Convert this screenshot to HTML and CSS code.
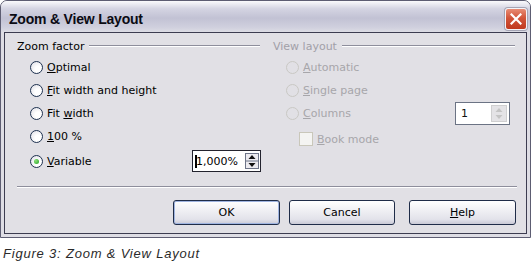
FILE: index.html
```html
<!DOCTYPE html>
<html lang="en">
  <head>
    <meta charset="UTF-8" />
    <title>Zoom &amp; View Layout</title>
    <link rel="stylesheet" href="styles.css">
  </head>
  <body>
    <div class="window">
      <div class="titlebar">
        <span class="title">Zoom &amp; View Layout</span>
        <span class="close">
          <svg width="12" height="12" viewBox="0 0 12 12">
            <path d="M1.5 1.5 L10.5 10.5 M10.5 1.5 L1.5 10.5" stroke="#fff" stroke-width="2.2" stroke-linecap="square" />
          </svg>
        </span>
      </div>

      <div class="client">
        <div class="groups">
          <!-- Zoom factor -->
          <section class="group">
            <div class="group-head"><span>Zoom factor</span><i class="rule"></i></div>
            <div class="opt"><span class="radio"></span><span><u>O</u>ptimal</span></div>
            <div class="opt"><span class="radio"></span><span><u>F</u>it width and height</span></div>
            <div class="opt"><span class="radio"></span><span>Fit <u>w</u>idth</span></div>
            <div class="opt"><span class="radio"></span><span><u>1</u>00 %</span></div>
            <div class="opt opt-last">
              <span class="radio checked"></span><span><u>V</u>ariable</span>
              <span class="spin spin-var">
                <span class="spin-text"><b class="caret"></b>1,000%</span>
                <span class="spin-btns">
                  <svg width="14" height="16" viewBox="0 0 14 16">
                    <rect x="0.5" y="0.5" width="13" height="15" fill="#ecebf0" stroke="#6d7488" />
                    <line x1="1" y1="8" x2="13" y2="8" stroke="#6d7488" />
                    <path d="M7 2 L10.5 6 L3.5 6 Z" fill="#111" />
                    <path d="M7 14 L10.5 10 L3.5 10 Z" fill="#111" />
                  </svg>
                </span>
              </span>
            </div>
          </section>

          <!-- View layout -->
          <section class="group disabled">
            <div class="group-head"><span>View layout</span><i class="rule"></i></div>
            <div class="opt"><span class="radio"></span><span><u>A</u>utomatic</span></div>
            <div class="opt"><span class="radio"></span><span><u>S</u>ingle page</span></div>
            <div class="opt">
              <span class="radio"></span><span><u>C</u>olumns</span>
              <span class="spin spin-cols">
                <span class="spin-text">1</span>
                <span class="spin-btns">
                  <svg width="16" height="17" viewBox="0 0 16 17">
                    <rect x="0.5" y="0.5" width="15" height="16" fill="#e4e3e6" stroke="#cfcfd0" />
                    <path d="M8 3 L11.5 7 L4.5 7 Z" fill="#c4c4c4" />
                    <path d="M8 14 L11.5 10 L4.5 10 Z" fill="#c4c4c4" />
                  </svg>
                </span>
              </span>
            </div>
            <div class="opt opt-book"><span class="check"></span><span><u>B</u>ook mode</span></div>
          </section>
        </div>

        <div class="sep"></div>

        <div class="buttons">
          <button class="btn btn-default">OK</button>
          <button class="btn btn-cancel">Cancel</button>
          <button class="btn btn-help"><u>H</u>elp</button>
        </div>
      </div>
    </div>

    <p class="caption">Figure 3: Zoom &amp; View Layout</p>
  </body>
</html>
```

FILE: styles.css
```css
body {
  margin: 0;
  background: #fff;
  font-family: "DejaVu Sans", Verdana, sans-serif;
  font-size: 11px;
  color: #000;
}
u {
  text-decoration: underline;
  text-underline-offset: 1px;
}

.window {
  width: 529px;
  height: 236px;
  border: 1px solid #5d5d72;
  border-radius: 7px 7px 0 0;
  background: #dedde4;
  display: flex;
  flex-direction: column;
}
.titlebar {
  height: 27px;
  padding: 4px 3px 0 8px;
  display: flex;
  align-items: center;
  justify-content: space-between;
  border-radius: 6px 6px 0 0;
  background: linear-gradient(#fafafc 0%, #d4d4e2 25%, #c2c2d4 55%, #d0d0de 85%, #dcdce4 100%);
}
.title {
  font-family: "Liberation Sans", Arial, sans-serif;
  font-weight: bold;
  font-size: 14px;
  letter-spacing: -0.2px;
  color: #0b0b14;
}
.close {
  width: 20px;
  height: 20px;
  border: 1px solid #f4f4f8;
  border-radius: 3px;
  background: linear-gradient(#e88c74, #d2553a 45%, #c0391f);
  display: flex;
  align-items: center;
  justify-content: center;
  box-shadow: 0 0 0 1px #a4a4b4;
}

.client {
  flex: 1;
  margin: 0 3px 3px;
  border: 1px solid #3c3c50;
  background: #e1e0e5;
  display: flex;
  flex-direction: column;
}
.groups {
  display: grid;
  grid-template-columns: 243px 242px;
  column-gap: 13px;
  padding: 6px 10px 0 12px;
}
.group-head {
  height: 14px;
  display: flex;
  align-items: center;
  gap: 5px;
  margin-bottom: 3px;
}
.rule {
  flex: 1;
  height: 0;
  border-top: 1px solid #8e8e9c;
  border-bottom: 1px solid #fff;
}
.opt {
  height: 23px;
  display: flex;
  align-items: center;
  padding-left: 13px;
}
.opt-last {
  height: 26px;
}
.opt-book {
  height: 28px;
  padding-left: 26px;
}

.radio {
  width: 11px;
  height: 11px;
  border: 1px solid #1e3250;
  border-radius: 50%;
  background: radial-gradient(circle at 65% 65%, #fff 30%, #dcdce4 100%);
  margin-right: 4px;
  display: flex;
  align-items: center;
  justify-content: center;
}
.radio.checked::after {
  content: "";
  width: 5px;
  height: 5px;
  border-radius: 50%;
  background: radial-gradient(circle at 35% 35%, #8de07a, #21a121);
}
.check {
  width: 12px;
  height: 12px;
  border: 1px solid #c9c7ba;
  background: #f4f4f2;
  margin-right: 4px;
}
.disabled {
  color: #a7a6aa;
}
.disabled .group-head {
  color: #a19fa8;
}
.disabled .radio {
  border-color: #c9c8c4;
  background: #e1e0e5;
}

.spin {
  margin-left: auto;
  display: flex;
  align-items: center;
  justify-content: space-between;
  background: #fff;
}
.spin-var {
  width: 64px;
  height: 20px;
  border: 1px solid #23232e;
  padding: 0 1px 0 2px;
  margin-right: -1px;
}
.spin-text {
  display: flex;
  align-items: center;
  color: #000;
}
.caret {
  width: 2px;
  height: 13px;
  background: #000;
  margin-right: -1px;
}
.spin-btns {
  display: flex;
}
.spin-cols {
  width: 46px;
  height: 21px;
  border: 1px solid #6b7384;
  padding: 0 2px 0 5px;
  margin-right: 5px;
}
.spin-cols .spin-text {
  color: #111;
}

.sep {
  height: 0;
  margin: 12px 9px 0 12px;
  border-top: 1px solid #8e8e9c;
  border-bottom: 1px solid #fff;
}
.buttons {
  display: flex;
  justify-content: flex-end;
  padding: 12px 10px 8px 0;
}
.btn {
  height: 25px;
  font-family: "DejaVu Sans", Verdana, sans-serif;
  font-size: 11px;
  color: #000;
  border: 1px solid #1f2c48;
  border-radius: 3px;
  background: linear-gradient(#fff, #f0f0f4 40%, #e2e2ea 80%, #c9c9d6);
  padding: 0;
}
.btn-default {
  width: 107px;
  box-shadow: inset 0 0 0 1px #9fb4e0;
}
.btn-cancel {
  width: 106px;
  margin-left: 9px;
}
.btn-help {
  width: 107px;
  margin-left: 14px;
}

.caption {
  margin: 8px 0 0 3px;
  font-family: "Liberation Sans", Arial, sans-serif;
  font-style: italic;
  font-size: 13px;
  letter-spacing: 0.8px;
  color: #2a2a2a;
}
```
